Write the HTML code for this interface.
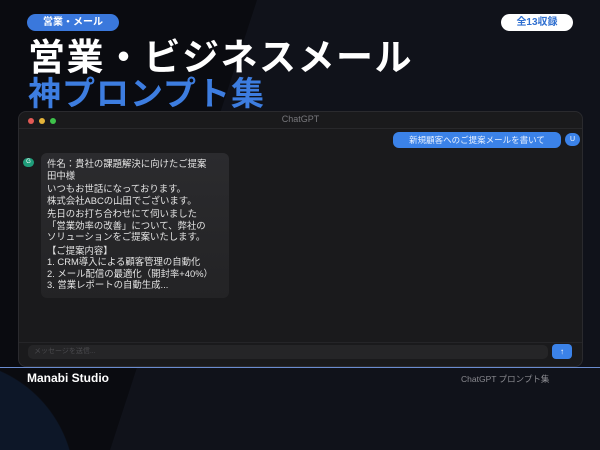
<!DOCTYPE html><html><head><meta charset="utf-8"><style>
*{margin:0;padding:0;box-sizing:border-box}
html,body{width:600px;height:450px;overflow:hidden;background:#0a0b10}
body{font-family:"Liberation Sans","Noto Sans CJK JP",sans-serif}
#root{position:relative;width:600px;height:450px;overflow:hidden;background:#0a0b10}
.bg1{position:absolute;left:0;top:0;width:600px;height:450px;background:#10121a;clip-path:polygon(257px 0,600px 0,600px 450px,110px 450px)}
.bg2{position:absolute;left:0;top:360px;width:100px;height:90px;background:radial-gradient(circle at -50px 125px,#0d1728 124px,transparent 125px)}
.abs{position:absolute}
.badge{top:14px;height:17px;border-radius:9px;font-size:10px;line-height:17px;text-align:center;font-weight:bold}
.t1{left:28px;top:38px;font-size:37px;font-weight:bold;color:#fff;line-height:40px;letter-spacing:1.5px}
.t2{left:28px;top:77px;font-size:33px;font-weight:bold;color:#3d7de0;line-height:34px;letter-spacing:1px}
.win{left:18px;top:111px;width:565px;height:256px;background:#1a1a1c;border-radius:8px;border:1px solid #2a2a2e;overflow:hidden}
.dot{top:6px;width:6px;height:6px;border-radius:50%}
.ai{left:22px;top:41px;width:188px;height:145px;background:linear-gradient(#2b2b2e,#232325);border-radius:6px;color:#e4e4e4;font-size:9.4px;line-height:11.5px;padding:5px 6px;overflow:hidden}
</style></head><body><div id="root">
<div class="bg1"></div><div class="bg2"></div>
<div class="abs badge" style="left:27px;width:92px;background:#3a78dc;color:#fff">営業・メール</div>
<div class="abs badge" style="left:501px;width:72px;background:#fff;color:#2f6fd0">全13収録</div>
<div class="abs t1">営業・ビジネスメール</div>
<div class="abs t2">神プロンプト集</div>
<div class="abs win">
 <div class="abs dot" style="left:9px;background:#e35a55"></div>
 <div class="abs dot" style="left:20px;background:#e5b43a"></div>
 <div class="abs dot" style="left:31px;background:#3ec24a"></div>
 <div class="abs" style="left:0;width:100%;top:2px;text-align:center;color:#77777b;font-size:9px">ChatGPT</div>
 <div class="abs" style="left:0;top:16px;width:100%;height:1px;background:#28282b"></div>
 <div class="abs" style="left:374px;top:20px;width:168px;height:16px;border-radius:6px;background:#3b82e8;color:#eaf2ff;font-size:8.5px;line-height:16px;text-align:center">新規顧客へのご提案メールを書いて</div>
 <div class="abs" style="left:546px;top:21px;width:15px;height:13px;border-radius:7px;background:#3b82e8;color:#fff;font-size:7px;line-height:13px;text-align:center">U</div>
 <div class="abs" style="left:4px;top:46px;width:11px;height:9px;border-radius:5px;background:#1f9d7a;color:#fff;font-size:6px;line-height:9px;text-align:center">G</div>
 <div class="abs ai">件名：貴社の課題解決に向けたご提案<br>田中様<br><div style="height:2px"></div>いつもお世話になっております。<br>株式会社ABCの山田でございます。<br><div style="height:2px"></div>先日のお打ち合わせにて伺いました<br>「営業効率の改善」について、弊社の<br>ソリューションをご提案いたします。<br><div style="height:2px"></div>【ご提案内容】<br>1. CRM導入による顧客管理の自動化<br>2. メール配信の最適化（開封率+40%）<br>3. 営業レポートの自動生成...</div>
 <div class="abs" style="left:0;top:230px;width:100%;height:1px;background:#252528"></div>
 <div class="abs" style="left:9px;top:233px;width:520px;height:14px;border-radius:5px;background:#252527;color:#4a4a4e;font-size:7px;line-height:14px;padding-left:6px">メッセージを送信...</div>
 <div class="abs" style="left:533px;top:232px;width:20px;height:15px;border-radius:4px;background:#3b82e8;color:#fff;font-size:8px;line-height:15px;text-align:center">↑</div>
</div>
<div class="abs" style="left:0;top:367px;width:600px;height:1px;background:#6a8cd0"></div>
<div class="abs" style="left:27px;top:371px;color:#fff;font-size:12px;font-weight:bold">Manabi Studio</div>
<div class="abs" style="left:461px;top:373px;color:#8a8a90;font-size:8.5px">ChatGPT プロンプト集</div>
</div></body></html>
